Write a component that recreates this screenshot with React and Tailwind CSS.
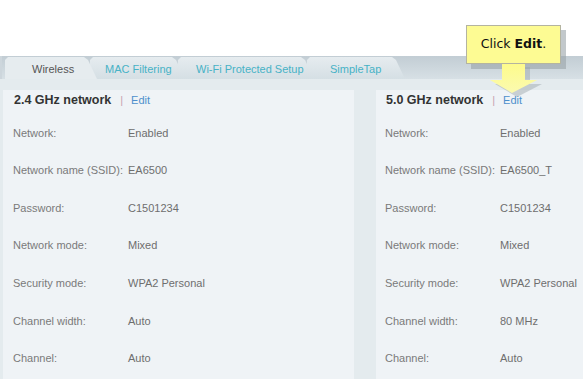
import React from 'react';

const rows24 = [
  ['Network:', 'Enabled'],
  ['Network name (SSID):', 'EA6500'],
  ['Password:', 'C1501234'],
  ['Network mode:', 'Mixed'],
  ['Security mode:', 'WPA2 Personal'],
  ['Channel width:', 'Auto'],
  ['Channel:', 'Auto'],
];

const rows50 = [
  ['Network:', 'Enabled'],
  ['Network name (SSID):', 'EA6500_T'],
  ['Password:', 'C1501234'],
  ['Network mode:', 'Mixed'],
  ['Security mode:', 'WPA2 Personal'],
  ['Channel width:', '80 MHz'],
  ['Channel:', 'Auto'],
];

function Tab({ label, active, width, z }) {
  return (
    <div
      className={`h-[22px] -mr-[7px] flex items-center pt-[2px] text-[11px] [clip-path:polygon(0_100%,0_3px,3px_0,calc(100%-13px)_0,calc(100%-9px)_3px,100%_100%)] ${
        active ? 'bg-[#e6ecef] text-[#555]' : 'bg-gradient-to-b from-[#e6ecef] to-[#d5dfe4] text-[#47b2c6]'
      } ${width} ${z}`}
    >
      {label}
    </div>
  );
}

function Panel({ title, rows, className, right }) {
  return (
    <div className={`bg-[#eff3f6] h-full ${className}`}>
      <div className={`h-[21px] flex items-center ${right ? 'pl-[10px]' : 'pl-[11px]'}`}>
        <span className="font-bold text-[12.5px] text-[#333]">{title}</span>
        <span className="text-[11px] text-[#c7a2b0] ml-[9px]">|</span>
        <span className="text-[11px] text-[#4d8fcc] ml-[8px]">Edit</span>
      </div>
      <div className="pt-[3px]">
        {rows.map(([k, v]) => (
          <div key={k} className={`h-[37.6px] flex items-center text-[11px] ${right ? 'pl-[9px]' : 'pl-[10px]'}`}>
            <span className="w-[115px] text-[#7a7a7a]">{k}</span>
            <span className="text-[#6e6e6e]">{v}</span>
          </div>
        ))}
      </div>
    </div>
  );
}

export default function App() {
  return (
    <div className="w-[583px] h-[379px] bg-white relative overflow-hidden font-['Liberation_Sans',Arial,sans-serif]">
      <div className="h-[56px]" />

      {/* tab strip */}
      <div className="h-[23px] bg-gradient-to-b from-[#c2cdd4] to-[#d7e0e5] flex items-end pl-[3px] border-l-[2px] border-[#cdd6dc]">
        <Tab label="Wireless" active width="w-[92px]" z="z-40 pl-[27px]" />
        <Tab label="MAC Filtering" width="w-[95px]" z="z-30 pl-[15px]" />
        <Tab label="Wi-Fi Protected Setup" width="w-[136px]" z="z-20 pl-[18px]" />
        <Tab label="SimpleTap" width="w-[98px]" z="z-10 pl-[23px]" />
      </div>

      {/* content */}
      <div className="h-[300px] bg-[#e4ebee] pt-[11px] pl-[3px] flex gap-[22px]">
        <Panel title="2.4 GHz network" rows={rows24} className="w-[351px]" />
        <Panel title="5.0 GHz network" rows={rows50} className="flex-1" right />
      </div>

      {/* callout */}
      <div className="absolute left-[471px] top-[30px] w-[95px] h-[39px] bg-[#9aa3a9] opacity-60" />
      <svg className="absolute left-[488px] top-[63px]" width="56" height="36" viewBox="0 0 56 36">
        <defs>
          <linearGradient id="ag" x1="0" y1="0" x2="0" y2="1">
            <stop offset="0" stopColor="#fdfb8a" />
            <stop offset="1" stopColor="#fbfab0" />
          </linearGradient>
        </defs>
        <polygon points="19,4 42,4 42,21 54,21 29,34 7,21 19,21" fill="#9aa3a9" opacity="0.45" />
        <polygon points="14,0 37,0 37,17 49,17 24,30 2,17 14,17" fill="url(#ag)" />
      </svg>
      <div className="absolute left-[466px] top-[25px] w-[95px] h-[39px] bg-[#fdfb93] border border-[#b4b4a0] flex items-center justify-center text-[12.5px] text-[#111] font-['DejaVu_Sans',Verdana,sans-serif]">
        Click&nbsp;<b>Edit</b>.
      </div>
    </div>
  );
}
